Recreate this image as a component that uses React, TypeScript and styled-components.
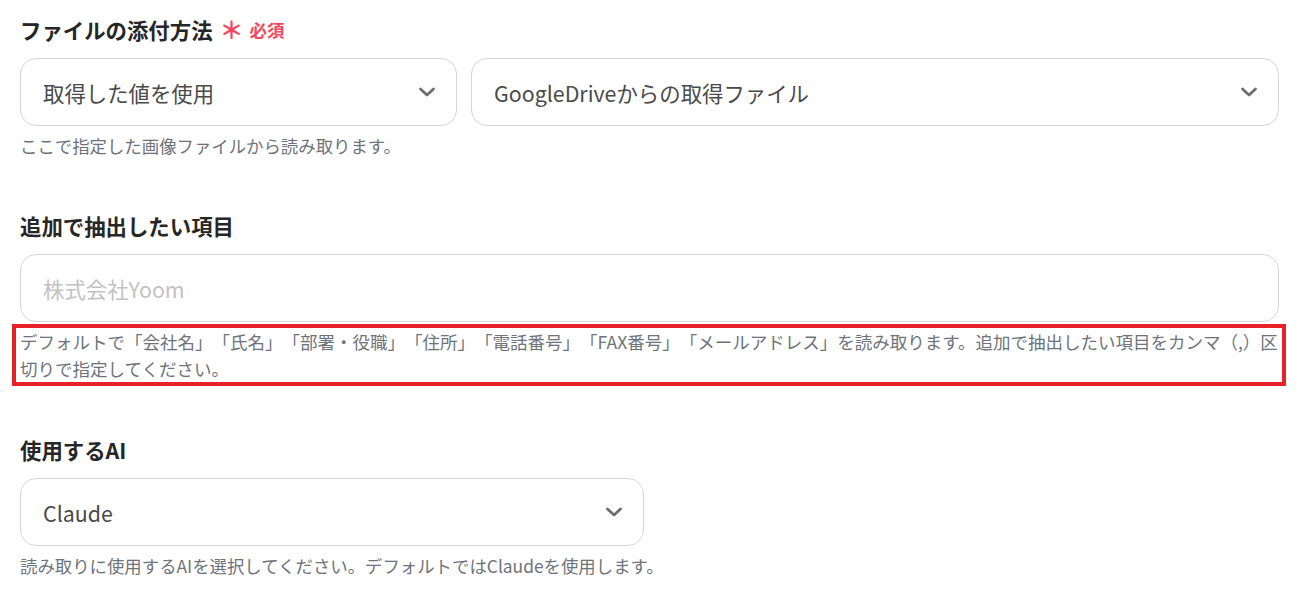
import React from 'react';
import styled, { createGlobalStyle } from 'styled-components';

const GlobalStyle = createGlobalStyle`
  body {
    margin: 0;
    background: #fff;
    font-family: 'Noto Sans CJK JP', 'Noto Sans', sans-serif;
    text-spacing-trim: space-all;
  }
`;

const Page = styled.div`
  width: 1259px;
  padding: 15px 0 0 20px;
`;

const Field = styled.section<{ $gap?: number }>`
  margin-bottom: ${(p) => p.$gap ?? 0}px;
`;

const Label = styled.div`
  display: flex;
  align-items: center;
  gap: 7px;
  height: 28px;
  font-size: 21.4px;
  font-weight: 700;
  color: #262626;
  margin-bottom: 15px;
`;

const Required = styled.span`
  display: flex;
  align-items: center;
  gap: 6px;
  color: #f3475f;
  font-size: 17.5px;
  font-weight: 700;
`;

const Star = styled.span`
  font-size: 24px;
  line-height: 1;
`;

const Row = styled.div`
  display: flex;
  gap: 14px;
`;

const Select = styled.div<{ $width?: number }>`
  box-sizing: border-box;
  display: flex;
  align-items: center;
  justify-content: space-between;
  height: 68px;
  width: ${(p) => (p.$width ? `${p.$width}px` : 'auto')};
  flex: ${(p) => (p.$width ? 'none' : '1')};
  padding: 0 20px 0 22px;
  border: 1px solid #d3d6dc;
  border-radius: 16px;
  font-size: 21.4px;
  color: #4a4a4a;
`;

const Input = styled.div`
  box-sizing: border-box;
  display: flex;
  align-items: center;
  height: 68px;
  padding: 0 22px;
  border: 1px solid #d3d6dc;
  border-radius: 16px;
  font-size: 21.4px;
  color: #c2c2c2;
`;

const Help = styled.p`
  margin: 8px 0 0;
  font-size: 17.4px;
  line-height: 24px;
  color: #6e737b;
`;

const Highlight = styled.div`
  margin: 2px -7px 0 -8px;
  border: 4px solid #e8212a;
  padding: 0 3px 0 4px;
  font-size: 17.5px;
  line-height: 27px;
  color: #6e737b;
`;

const Chevron = () => (
  <svg width="18" height="12" viewBox="0 0 18 12" fill="none">
    <path d="M2.5 3 L9 9 L15.5 3" stroke="#6e6e6e" strokeWidth="2.8" strokeLinecap="round" strokeLinejoin="round" />
  </svg>
);

export default function App() {
  return (
    <>
      <GlobalStyle />
      <Page>
        <Field $gap={53}>
          <Label>
            ファイルの添付方法
            <Required>
              <Star>＊</Star>必須
            </Required>
          </Label>
          <Row>
            <Select $width={437}>
              取得した値を使用
              <Chevron />
            </Select>
            <Select>
              GoogleDriveからの取得ファイル
              <Chevron />
            </Select>
          </Row>
          <Help>ここで指定した画像ファイルから読み取ります。</Help>
        </Field>
        <Field $gap={49}>
          <Label>追加で抽出したい項目</Label>
          <Input>株式会社Yoom</Input>
          <Highlight>
            デフォルトで「会社名」「氏名」「部署・役職」「住所」「電話番号」「FAX番号」「メールアドレス」を読み取ります。追加で抽出したい項目をカンマ（,）区切りで指定してください。
          </Highlight>
        </Field>
        <Field>
          <Label>使用するAI</Label>
          <Select $width={624}>
            Claude
            <Chevron />
          </Select>
          <Help>読み取りに使用するAIを選択してください。デフォルトではClaudeを使用します。</Help>
        </Field>
      </Page>
    </>
  );
}
